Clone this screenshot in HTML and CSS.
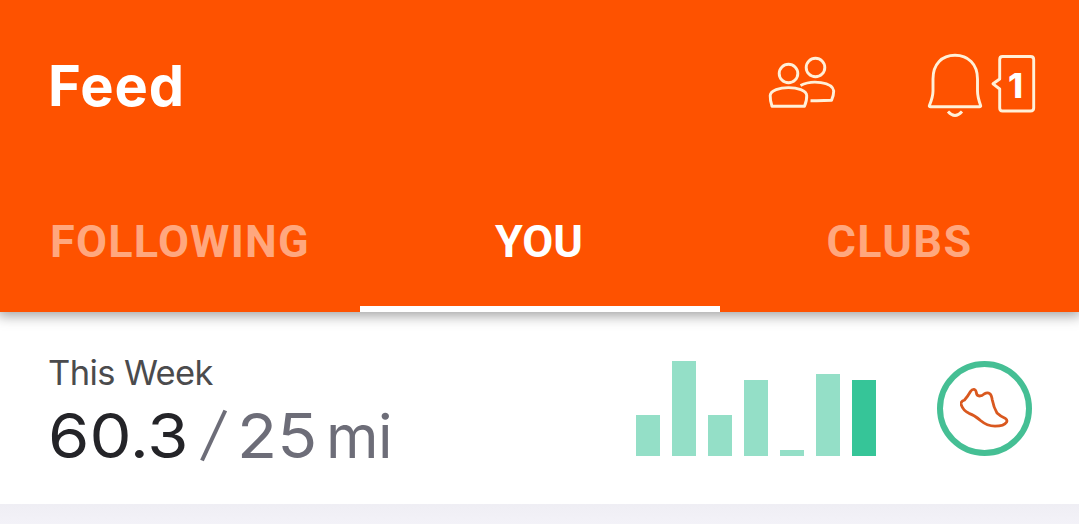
FILE: index.html
```html
<!DOCTYPE html>
<html lang="en">
<head>
    <meta charset="UTF-8">
    <meta name="viewport" content="width=device-width, initial-scale=1.0">
    <title>Feed</title>
    <link rel="stylesheet" href="styles.css">
</head>
<body>
    <header class="header">
        <div class="top-bar">
            <h1>Feed</h1>
            <div class="actions">
                <svg class="friends-icon" width="70" height="56" viewBox="767 55 70 56">
                    <circle cx="788.5" cy="73.5" r="9.3"/>
                    <circle cx="815.5" cy="67.5" r="9.3"/>
                    <path d="M772 106.300 H804.500 Q807 100 806.700 95.500 C806 85 771 85 770.200 95.500 Q770 100 772 106.300 Z"/>
                    <path d="M800.500 85.500 C812 79.500 832.500 82 833.700 91 Q833.800 95 831.500 100.300 Q821 101 810.500 100.700"/>
                </svg>
                <svg class="bell-icon" width="56" height="66" viewBox="927 52 56 66">
                    <path d="M933 79 C933 64 942 55.300 955 55.300 C968 55.300 977.500 64 977.500 79 V91 Q977.500 97 980.700 105.700 Q981 106.700 979.500 106.700 H930.500 Q929 106.700 929.300 105.700 Q933 97 933 91 Z"/>
                    <path d="M948 111.500 Q955 119.500 962 111.500"/>
                </svg>
                <div class="badge">
                    <svg width="46" height="58" viewBox="991 55 46 58">
                        <path d="M1002.500 56.500 H1030.500 Q1033.700 56.500 1033.700 59.500 V108 Q1033.700 111 1030.500 111 H1002.500 Q999.700 111 999.700 108 V89 L993 83.800 L999.700 79 V59.500 Q999.700 56.500 1002.500 56.500 Z"/>
                    </svg>
                    <span>1</span>
                </div>
            </div>
        </div>
        <nav class="tabs">
            <a class="tab following">FOLLOWING</a>
            <a class="tab you active">YOU</a>
            <a class="tab clubs">CLUBS</a>
        </nav>
    </header>

    <section class="week">
        <div class="stats">
            <p class="label">This Week</p>
            <p class="distance">
                <span class="done">60.3</span>
                <svg class="slash" width="28" height="53" viewBox="0 0 28 53"><path d="M2 51.500 L25.300 1.500"/></svg>
                <span class="goal">25</span>
                <span class="unit">mi</span>
            </p>
        </div>

        <div class="chart">
            <div class="bar" style="height: 41px"></div>
            <div class="bar" style="height: 95px"></div>
            <div class="bar" style="height: 41px"></div>
            <div class="bar" style="height: 76px"></div>
            <div class="bar" style="height: 6px"></div>
            <div class="bar" style="height: 82px"></div>
            <div class="bar today" style="height: 76px"></div>
        </div>

        <div class="goal-ring">
            <svg width="50" height="42" viewBox="960 386.500 50 42">
                <path d="M974.300 388 Q976 388.500 976.300 391 Q976.700 394.300 979.500 394.500 Q982 394.500 984.500 392.300 Q987.500 390.500 990 392.300 Q991.500 393.500 992.300 398.500 Q993.700 406 997 411.500 Q1000 414.500 1005.500 417 Q1007.500 418.500 1006.700 420.500 Q1004 424.700 995 424.700 Q987 424.500 980.500 419 Q975 413.700 969 411.800 Q962.500 408.500 961 402.500 Q960.700 400 964.500 398.500 Q968 394.500 970.500 390 Q972 387.700 974.300 388 Z"/>
            </svg>
        </div>
    </section>
</body>
</html>
```
FILE: styles.css
```css
* {
    box-sizing: border-box;
}

body {
    margin: 0;
    height: 524px;
    background: linear-gradient(#efeef4 504px, #f3f2f8 524px);
    font-family: Inter, "Liberation Sans", sans-serif;
    overflow: hidden;
}

h1, p {
    margin: 0;
}

svg {
    display: block;
    fill: none;
    stroke-linejoin: round;
    stroke-linecap: butt;
}

.header {
    position: relative;
    height: 312px;
    background-color: #fe5200;
    color: #fff;
    box-shadow: 0 2px 12px 2px rgba(0, 0, 0, 0.36);
}

.top-bar {
    display: flex;
    justify-content: space-between;
    height: 170px;
    padding: 52px 42px 0 48px;
}

.top-bar h1 {
    font-size: 56px;
    line-height: 68px;
    font-weight: 700;
    letter-spacing: 0.9px;
}

.actions {
    display: flex;
    align-items: flex-start;
    stroke: #fff0d8;
    stroke-width: 2.9;
}

.friends-icon {
    margin: 3px 90px 0 0;
}

.bell-icon {
    margin-right: 8px;
}

.badge {
    position: relative;
    margin-top: 3px;
}

.badge span {
    position: absolute;
    left: 17px;
    top: 12px;
    font-size: 34px;
    line-height: 38px;
    font-weight: 800;
}

.tabs {
    display: grid;
    grid-template-columns: 360px 360px 359px;
    height: 142px;
}

.tab {
    padding-top: 46px;
    font-family: Roboto, sans-serif;
    font-size: 45px;
    line-height: 52px;
    font-weight: 700;
    text-align: center;
    color: #ffa77e;
}

.tab.active {
    padding-right: 2px;
    color: #fff;
    border-bottom: 6px solid #fff;
}

.following {
    letter-spacing: 1.2px;
}

.clubs {
    letter-spacing: 1.4px;
}

.week {
    display: flex;
    height: 192px;
    padding: 0 47px 0 49px;
    background-color: #fff;
}

.stats {
    width: 587px;
    padding-top: 40px;
}

.label {
    margin-left: -1px;
    font-size: 34.5px;
    line-height: 42px;
    letter-spacing: -0.6px;
    color: #4b4b4d;
}

.distance {
    display: flex;
    font-size: 61.5px;
    line-height: 74px;
    margin-top: 5px;
    color: #6d6d78;
}

.done {
    width: 152px;
    margin-left: -1px;
    transform: scaleX(1.085);
    transform-origin: left;
    color: #242428;
}

.slash {
    margin-top: 10px;
    stroke: #6d6d78;
    stroke-width: 4;
}

.goal {
    width: 89px;
    margin-left: 9px;
    transform: scaleX(1.07);
    transform-origin: left;
}

.unit {
    font-size: 60px;
    letter-spacing: -0.5px;
}

.chart {
    display: flex;
    align-items: flex-end;
    gap: 12px;
    height: 144px;
}

.bar {
    width: 24px;
    background-color: #94dfc7;
}

.bar.today {
    background-color: #36c598;
}

.goal-ring {
    display: flex;
    align-items: center;
    justify-content: center;
    width: 95px;
    height: 95px;
    margin: 49px 0 0 61px;
    border: 6px solid #45bf94;
    border-radius: 50%;
    stroke: #d9581f;
    stroke-width: 2.8;
}
```
